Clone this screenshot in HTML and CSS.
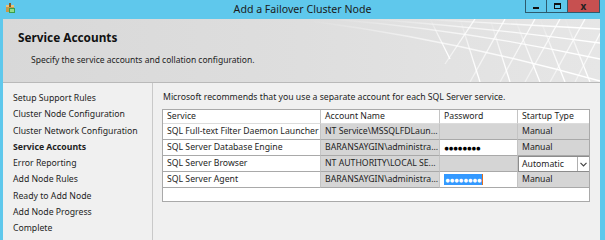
FILE: index.html
```html
<!DOCTYPE html>
<html lang="en">
<head>
    <meta charset="UTF-8">
    <title>Add a Failover Cluster Node</title>
    <link rel="stylesheet" href="styles.css">
</head>
<body>
    <div class="window">
        <div class="titlebar">
            <div class="app-icon">
                <svg width="11" height="11" viewBox="0 0 11 11">
                    <rect x="1" y="2" width="8" height="7" fill="#c89a4a"/>
                    <rect x="1" y="2" width="8" height="2" fill="#e8c27a"/>
                    <rect x="4" y="0" width="2" height="4" fill="#8a5a20"/>
                    <rect x="4" y="5" width="6" height="5" fill="#3aa04a"/>
                    <rect x="5" y="6" width="4" height="3" fill="#8fdc8a"/>
                </svg>
            </div>
            <div class="title">Add a Failover Cluster Node</div>
            <div class="controls">
                <div class="ctl min"><span></span></div>
                <div class="ctl max"><span></span></div>
                <div class="ctl close">x</div>
            </div>
        </div>
        <div class="frame">
            <div class="header">
                <svg class="mesh" width="290" height="63" viewBox="0 0 290 63">
                    <defs>
                        <linearGradient id="fade" x1="0" y1="0" x2="1" y2="0.4">
                            <stop offset="0" stop-color="#fff" stop-opacity="0"/>
                            <stop offset="0.45" stop-color="#fff" stop-opacity="0.6"/>
                            <stop offset="1" stop-color="#fff" stop-opacity="1"/>
                        </linearGradient>
                    </defs>
                    <g stroke="url(#fade)" stroke-width="1.3" fill="none">
                        <path d="M20 0 Q150 10 290 40"/>
                        <path d="M60 0 Q170 8 290 24"/>
                        <path d="M110 0 Q200 5 290 10"/>
                        <path d="M0 2 Q140 20 290 62"/>
                        <path d="M150 0 L170 63"/>
                        <path d="M180 0 L200 63"/>
                        <path d="M205 0 L230 63"/>
                        <path d="M230 0 L255 63"/>
                        <path d="M255 0 L280 63"/>
                        <path d="M195 0 L160 63"/>
                        <path d="M225 0 L190 63"/>
                        <path d="M250 0 L215 63"/>
                        <path d="M275 0 L240 63"/>
                        <path d="M295 5 L265 63"/>
                        <path d="M120 0 L140 40"/>
                        <path d="M165 0 L135 45"/>
                    </g>
                </svg>
                <div class="page-title">Service Accounts</div>
                <div class="page-desc">Specify the service accounts and collation configuration.</div>
            </div>
            <div class="main">
                <div class="nav">
                    <div class="nav-item">Setup Support Rules</div>
                    <div class="nav-item">Cluster Node Configuration</div>
                    <div class="nav-item">Cluster Network Configuration</div>
                    <div class="nav-item active">Service Accounts</div>
                    <div class="nav-item">Error Reporting</div>
                    <div class="nav-item">Add Node Rules</div>
                    <div class="nav-item">Ready to Add Node</div>
                    <div class="nav-item">Add Node Progress</div>
                    <div class="nav-item">Complete</div>
                </div>
                <div class="content">
                    <div class="intro">Microsoft recommends that you use a separate account for each SQL Server service.</div>
                    <div class="grid">
                        <div class="cell head">Service</div>
                        <div class="cell head">Account Name</div>
                        <div class="cell head">Password</div>
                        <div class="cell head">Startup Type</div>

                        <div class="cell">SQL Full-text Filter Daemon Launcher</div>
                        <div class="cell gray">NT Service\MSSQLFDLaun...</div>
                        <div class="cell gray"></div>
                        <div class="cell gray">Manual</div>

                        <div class="cell">SQL Server Database Engine</div>
                        <div class="cell gray">BARANSAYGIN\administra...</div>
                        <div class="cell pass"><span class="dots">&#9679;&#9679;&#9679;&#9679;&#9679;&#9679;&#9679;&#9679;</span></div>
                        <div class="cell gray">Manual</div>

                        <div class="cell">SQL Server Browser</div>
                        <div class="cell gray">NT AUTHORITY\LOCAL SE...</div>
                        <div class="cell gray"></div>
                        <div class="cell combo">
                            <span class="combo-text">Automatic</span>
                            <span class="combo-btn">
                                <svg width="7" height="5" viewBox="0 0 7 5"><path d="M0.5 0.8 L3.5 3.8 L6.5 0.8" stroke="#444" stroke-width="1.2" fill="none"/></svg>
                            </span>
                        </div>

                        <div class="cell">SQL Server Agent</div>
                        <div class="cell gray">BARANSAYGIN\administra...</div>
                        <div class="cell pass"><span class="dots selected">&#9679;&#9679;&#9679;&#9679;&#9679;&#9679;&#9679;&#9679;</span><span class="caret"></span></div>
                        <div class="cell gray">Manual</div>

                        <div class="blank"></div>
                    </div>
                </div>
            </div>
        </div>
    </div>
</body>
</html>
```

FILE: styles.css
```css
html, body{
    margin: 0;
    padding: 0;
}
body{
    width: 605px;
    height: 240px;
    overflow: hidden;
    background: #5fc8ec;
    font-family: "Noto Sans", "Open Sans", sans-serif;
    font-size: 8.7px;
    color: #1e1e1e;
}
.window{
    display: flex;
    flex-direction: column;
    height: 240px;
}
.titlebar{
    height: 19px;
    display: grid;
    grid-template-columns: 1fr auto 1fr;
    align-items: start;
}
.app-icon{
    padding: 3px 0 0 5px;
    height: 11px;
}
.title{
    font-size: 10.6px;
    line-height: 18px;
    color: #1a1a1a;
}
.controls{
    justify-self: end;
    display: flex;
    margin-right: 5px;
    border: 1px solid #2d5b6e;
    border-top: none;
    height: 12px;
}
.ctl{
    width: 20px;
    height: 12px;
    display: flex;
    align-items: center;
    justify-content: center;
    border-right: 1px solid #2d5b6e;
}
.ctl.min span{
    width: 6px;
    height: 2px;
    background: #111;
    margin-top: 4px;
}
.ctl.max span{
    width: 5px;
    height: 3px;
    border: 1px solid #111;
    border-top-width: 2px;
}
.ctl.close{
    width: 31px;
    border-right: none;
    background: #c75050;
    color: #222;
    font-weight: bold;
    font-size: 10px;
    line-height: 10px;
}
.frame{
    flex: 1;
    margin: 0 5px 0 3px;
    background: #f0f0f0;
    display: flex;
    flex-direction: column;
}
.header{
    height: 63px;
    position: relative;
    border-bottom: 1px solid #b9b9b9;
    background: linear-gradient(90deg, #d8d8d8 0%, #dedede 50%, #e6e6e6 100%);
    overflow: hidden;
}
.mesh{
    position: absolute;
    right: 0;
    top: 0;
}
.page-title{
    position: relative;
    padding: 10px 0 0 15px;
    font-size: 11.8px;
    font-weight: bold;
    line-height: 16px;
    color: #111;
}
.page-desc{
    position: relative;
    padding: 8px 0 0 28px;
    font-size: 8.5px;
    line-height: 14px;
    color: #222;
}
.main{
    flex: 1;
    display: flex;
}
.nav{
    width: 150px;
    border-right: 1px solid #c9c9c9;
    padding: 7px 0 0 10px;
    box-sizing: border-box;
}
.nav-item{
    line-height: 16.3px;
    white-space: nowrap;
}
.nav-item.active{
    font-weight: bold;
}
.content{
    padding: 7px 0 0 9px;
}
.intro{
    line-height: 14px;
    margin-left: 1px;
    white-space: nowrap;
}
.grid{
    margin-top: 5px;
    display: grid;
    grid-template-columns: 158px 119px 78px 71px;
    grid-template-rows: 14px repeat(4, 16px) 13px;
    border: 1px solid #a9a9a9;
    background: #fff;
    width: 426px;
}
.cell{
    border-right: 1px solid #c4c4c4;
    border-bottom: 1px solid #a9a9a9;
    padding-left: 4px;
    line-height: 15px;
    white-space: nowrap;
    overflow: hidden;
    box-sizing: border-box;
}
.cell.head{
    line-height: 13px;
    border-bottom-color: #dcdcdc;
}
.cell.gray{
    background: #d5d5d5;
}
.cell:nth-child(4n){
    border-right: none;
}
.pass{
    display: flex;
    align-items: center;
}
.dots{
    font-size: 8.5px;
    line-height: 11px;
    letter-spacing: -0.6px;
    color: #000;
}
.dots.selected{
    background: #3399ff;
    color: #fff;
    padding: 0 1px;
}
.caret{
    width: 1px;
    height: 11px;
    background: #e07020;
}
.combo{
    display: flex;
    border: 1px solid #8c8c8c;
    padding-left: 3px;
    background: #fff;
}
.combo-text{
    flex: 1;
}
.combo-btn{
    width: 11px;
    border-left: 1px solid #b0b0b0;
    display: flex;
    align-items: center;
    justify-content: center;
}
.blank{
    grid-column: 1 / -1;
}
```
